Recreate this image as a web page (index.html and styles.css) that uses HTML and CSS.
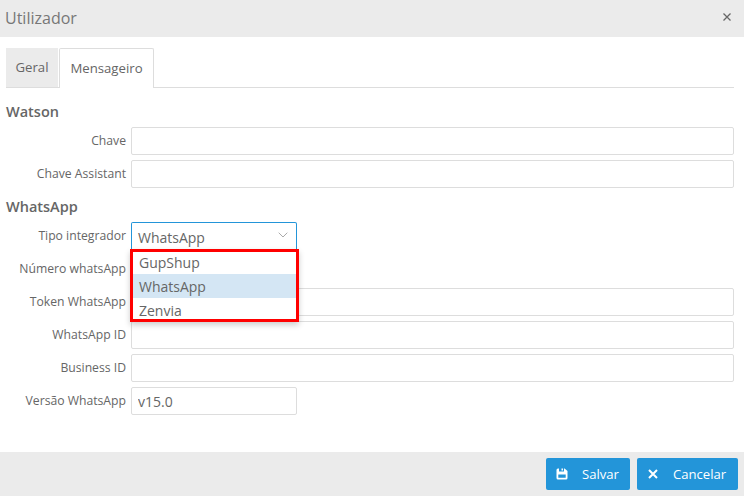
FILE: index.html
```html
<!DOCTYPE html>
<html lang="pt">
<head>
<meta charset="utf-8">
<title>Utilizador</title>
<link rel="stylesheet" href="styles.css">
</head>
<body>
<div class="dialog">
  <header class="titlebar">
    <h1 class="title">Utilizador</h1>
    <svg class="close" width="8" height="8" viewBox="0 0 8 8"><path d="M.5.5l7 7M7.500.5l-7 7" stroke="#666" stroke-width="1.300" fill="none"/></svg>
  </header>
  <main class="content">
    <nav class="tabs">
      <div class="tab">Geral</div>
      <div class="tab active">Mensageiro</div>
    </nav>
    <h2 class="section first">Watson</h2>
    <div class="row"><label class="label">Chave</label><input class="input wide"></div>
    <div class="row"><label class="label">Chave Assistant</label><input class="input wide"></div>
    <h2 class="section">WhatsApp</h2>
    <div class="row">
      <label class="label">Tipo integrador</label>
      <div class="select-wrap">
        <div class="select"><span>WhatsApp</span>
          <svg class="chev" width="10" height="6" viewBox="0 0 10 6"><path d="M.7.700L5 5l4.300-4.300" stroke="#aaa" stroke-width="1" fill="none"/></svg>
        </div>
        <ul class="menu">
          <li class="option top">GupShup</li>
          <li class="option selected">WhatsApp</li>
          <li class="option bottom">Zenvia</li>
        </ul>
      </div>
    </div>
    <div class="row"><label class="label">Número whatsApp</label><input class="input narrow"></div>
    <div class="row"><label class="label">Token WhatsApp</label><input class="input wide"></div>
    <div class="row"><label class="label">WhatsApp ID</label><input class="input wide"></div>
    <div class="row"><label class="label">Business ID</label><input class="input wide"></div>
    <div class="row"><label class="label">Versão WhatsApp</label><input class="input narrow" value="v15.0"></div>
  </main>
  <footer class="footer">
    <button class="btn save">
      <svg class="btn-icon" width="12" height="12" viewBox="0 0 12 12"><path fill="#fff" fill-rule="evenodd" d="M2 .5h1v3h5v-3h.6L11.500 3v7a1.500 1.500 0 0 1-1.500 1.500H2A1.500 1.500 0 0 1 .5 10V2A1.500 1.500 0 0 1 2 .5zM2.300 6.500v3.300h7.400V6.500zM5.500.5h1.500v2H5.500z"/></svg>
      <span>Salvar</span>
    </button>
    <button class="btn cancel">
      <svg class="btn-icon" width="10" height="10" viewBox="0 0 10 10"><path d="M1 1l8 8M9 1l-8 8" stroke="#fff" stroke-width="2" fill="none"/></svg>
      <span>Cancelar</span>
    </button>
  </footer>
</div>
</body>
</html>
```
FILE: styles.css
```css
* { box-sizing: border-box; }
html, body { margin: 0; padding: 0; }
body { font-family: "Open Sans", "Liberation Sans", sans-serif; color: #666; background: #fff; }
.dialog { width: 744px; height: 496px; display: flex; flex-direction: column; overflow: hidden; }
.titlebar { height: 37px; background: #ebebeb; display: flex; align-items: center; justify-content: space-between; padding: 0 13px 0 5px; flex: none; }
.title { margin: 0; font-size: 16px; font-weight: 400; color: #777; line-height: 37px; }
.close { display: block; margin-top: -3px; }
.content { flex: 1; padding: 11px 10px 0 6px; }
.tabs { display: flex; height: 40px; border-bottom: 1px solid #ddd; gap: 1px; }
.tab { width: 52px; height: 39px; text-align: center; line-height: 39px; font-size: 13.200px; color: #666; background: #ebebeb; }
.tab.active { width: 95px; height: 40px; background: #fff; border: 1px solid #ddd; border-bottom: 0; border-radius: 2px 2px 0 0; }
.section { font-size: 14.500px; font-weight: 600; color: #666; line-height: 20px; height: 20px; margin: 9px 0 5px; }
.section.first { margin: 14px 0 5px; }
.row { display: flex; gap: 5px; margin-bottom: 5px; height: 28px; }
.label { width: 120px; flex: none; display: flex; justify-content: flex-end; font-size: 12.200px; color: #666; line-height: 27px; white-space: nowrap; }
.input { height: 28px; padding: 0 6px; border: 1px solid #ddd; border-radius: 2px; font-family: inherit; font-size: 14px; color: #666; background: #fff; outline: none; }
.wide { flex: 1; min-width: 0; }
.narrow { width: 166px; flex: none; }
.select-wrap { position: relative; width: 166px; }
.select { height: 28px; display: flex; align-items: center; justify-content: space-between; padding: 3px 8px 0 6px; border: 1px solid #2395d9; border-bottom-color: transparent; border-radius: 2px 2px 0 0; font-size: 14px; color: #666; background: #fff; }
.chev { margin-top: -5px; }
.menu { position: absolute; z-index: 2; top: 27px; left: -1px; width: 169px; margin: 0; padding: 0; list-style: none; border: 3px solid #f00; background: #fff; box-shadow: 0 3px 6px rgba(0,0,0,.2); }
.option { height: 24px; line-height: 25px; padding-left: 6px; font-size: 14px; color: #666; }
.option.top { height: 22px; line-height: 22px; }
.option.bottom { height: 21px; }
.option.selected { background: #d4e6f4; }
.footer { height: 44px; flex: none; background: #ebebeb; display: flex; justify-content: flex-end; align-items: center; gap: 7px; padding: 0 6px 0 0; }
.btn { height: 32px; border: 0; border-radius: 2px; background: #2395d9; color: #fff; font-family: inherit; font-size: 13.100px; display: flex; align-items: center; padding: 0; }
.save { width: 84px; padding-left: 10px; }
.save .btn-icon { margin-right: 14px; }
.cancel { width: 101px; padding-left: 11px; }
.cancel .btn-icon { margin-right: 15px; }
```
